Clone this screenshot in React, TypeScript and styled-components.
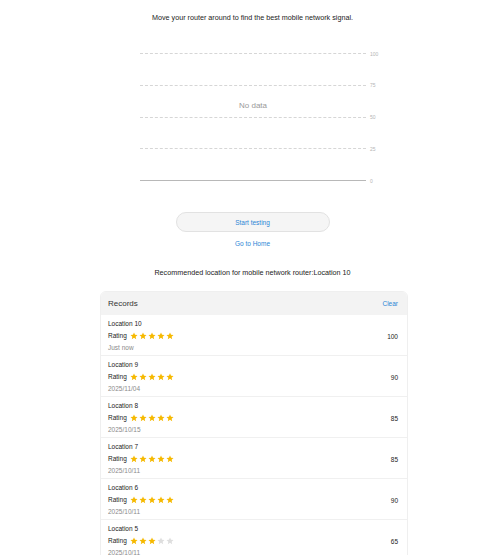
import styled, { createGlobalStyle } from "styled-components";

const GlobalStyle = createGlobalStyle`
  body {
    margin: 0;
    background: #fff;
    font-family: "Liberation Sans", Arial, sans-serif;
    color: #222;
  }
`;

const Page = styled.main`
  width: 500px;
  box-sizing: border-box;
  padding-left: 5px;
  display: flex;
  flex-direction: column;
  align-items: center;
`;

const Title = styled.p`
  margin: 13px 0 0;
  font-size: 7.2px;
  line-height: 10px;
  color: #222;
`;

const Chart = styled.div`
  position: relative;
  margin: 28px 0 0 15px;
  width: 240px;
  display: flex;
  flex-direction: column;
  gap: 26.75px;
`;

const GridRow = styled.div`
  display: flex;
  align-items: center;
  gap: 4px;
  height: 5px;
`;

const GridLine = styled.div<{ $solid?: boolean }>`
  width: 226px;
  border-top: 1px ${(p) => (p.$solid ? "solid #b8b8b8" : "dashed #d6d6d6")};
`;

const AxisLabel = styled.span`
  font-size: 5px;
  color: #b5b5b5;
`;

const Empty = styled.span`
  position: absolute;
  left: 0;
  width: 226px;
  top: 50px;
  text-align: center;
  font-size: 8px;
  color: #999;
`;

const StartButton = styled.button`
  margin-top: 29px;
  width: 154px;
  height: 20px;
  border-radius: 10px;
  border: 1px solid #e2e2e2;
  background: #f5f5f5;
  color: #2c86d6;
  font-family: inherit;
  font-size: 6.5px;
`;

const HomeLink = styled.a`
  margin-top: 7px;
  font-size: 6.5px;
  line-height: 10px;
  color: #2c86d6;
`;

const Recommend = styled.p`
  margin: 19px 0 0;
  font-size: 7.2px;
  line-height: 10px;
  color: #222;
`;

const Card = styled.section`
  margin: 13px 0 0 3px;
  width: 306px;
  border: 1px solid #efefef;
  border-radius: 6px;
  overflow: hidden;
`;

const CardHeader = styled.header`
  height: 23px;
  display: flex;
  align-items: center;
  justify-content: space-between;
  padding: 0 9px 0 7px;
  background: #f3f3f3;
`;

const CardTitle = styled.span`
  font-size: 8px;
  color: #333;
`;

const ClearLink = styled.a`
  font-size: 6.5px;
  color: #2c86d6;
`;

const Row = styled.div`
  display: flex;
  align-items: center;
  justify-content: space-between;
  padding: 3px 9px 1px 7px;
  border-top: 1px solid #f0f0f0;
  &:first-of-type {
    border-top: none;
  }
`;

const Info = styled.div`
  display: flex;
  flex-direction: column;
  font-size: 6.5px;
  line-height: 12px;
`;

const Name = styled.span`
  color: #222;
`;

const RatingLine = styled.span`
  display: flex;
  align-items: center;
  gap: 3px;
  color: #222;
`;

const Stars = styled.span`
  display: flex;
  gap: 1px;
`;

const When = styled.span`
  color: #8a8a8a;
`;

const Score = styled.span`
  font-size: 6.5px;
  color: #222;
`;

const Star = ({ on }: { on: boolean }) => (
  <svg width="8" height="8" viewBox="0 0 24 24">
    <path
      d="M12 1.5l3.1 7 7.4.6-5.6 4.9 1.7 7.4L12 17.5l-6.6 3.9 1.7-7.4L1.5 9.1l7.4-.6z"
      fill={on ? "#f6b900" : "#dedede"}
    />
  </svg>
);

const records = [
  { name: "Location 10", stars: 5, when: "Just now", score: 100 },
  { name: "Location 9", stars: 5, when: "2025/11/04", score: 90 },
  { name: "Location 8", stars: 5, when: "2025/10/15", score: 85 },
  { name: "Location 7", stars: 5, when: "2025/10/11", score: 85 },
  { name: "Location 6", stars: 5, when: "2025/10/11", score: 90 },
  { name: "Location 5", stars: 3, when: "2025/10/11", score: 65 },
];

const ticks = [100, 75, 50, 25, 0];

export default function App() {
  return (
    <>
      <GlobalStyle />
      <Page>
        <Title>Move your router around to find the best mobile network signal.</Title>
        <Chart>
          {ticks.map((t) => (
            <GridRow key={t}>
              <GridLine $solid={t === 0} />
              <AxisLabel>{t}</AxisLabel>
            </GridRow>
          ))}
          <Empty>No data</Empty>
        </Chart>
        <StartButton>Start testing</StartButton>
        <HomeLink>Go to Home</HomeLink>
        <Recommend>Recommended location for mobile network router:Location 10</Recommend>
        <Card>
          <CardHeader>
            <CardTitle>Records</CardTitle>
            <ClearLink>Clear</ClearLink>
          </CardHeader>
          {records.map((r) => (
            <Row key={r.name}>
              <Info>
                <Name>{r.name}</Name>
                <RatingLine>
                  Rating
                  <Stars>
                    {[1, 2, 3, 4, 5].map((i) => (
                      <Star key={i} on={i <= r.stars} />
                    ))}
                  </Stars>
                </RatingLine>
                <When>{r.when}</When>
              </Info>
              <Score>{r.score}</Score>
            </Row>
          ))}
        </Card>
      </Page>
    </>
  );
}
